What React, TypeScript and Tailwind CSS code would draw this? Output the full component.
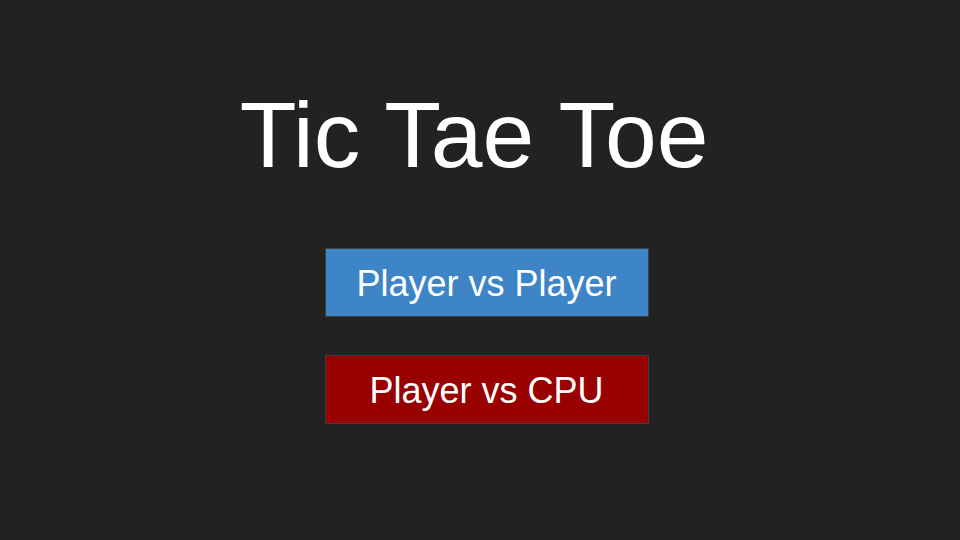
export default function App() {
  return (
    <div
      className="w-full h-screen bg-[#222222] flex flex-col items-center"
      style={{ fontFamily: '"Liberation Sans", Arial, sans-serif' }}
    >
      <h1 className="mt-[89px] mr-[12px] text-[93px] leading-none text-white">Tic Tae Toe</h1>

      <div className="mt-[66px] ml-[13px] flex flex-col gap-[38px]">
        <button className="w-[324px] h-[69px] pt-[2px] flex items-center justify-center bg-[#3d85c6] border border-[#3f3f3f] text-white text-[36px]">
          Player vs Player
        </button>
        <button className="w-[324px] h-[69px] pt-[2px] flex items-center justify-center bg-[#990000] border border-[#3f3f3f] text-white text-[36px]">
          Player vs CPU
        </button>
      </div>
    </div>
  );
}
